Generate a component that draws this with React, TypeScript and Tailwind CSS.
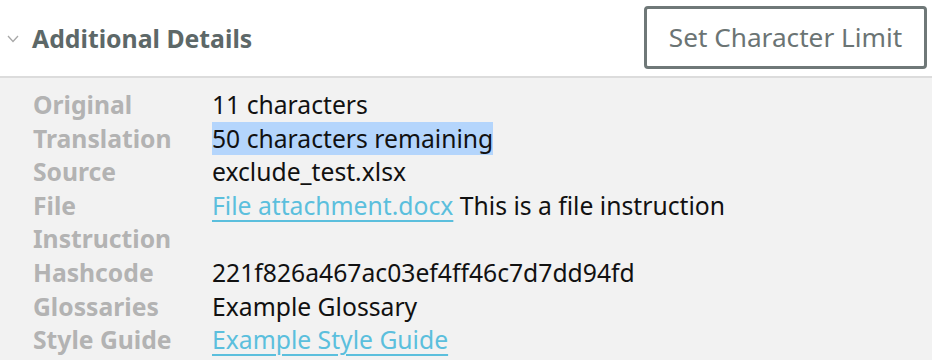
const ROWS: { label: string; value: React.ReactNode }[] = [
  { label: 'Original', value: '11 characters' },
  {
    label: 'Translation',
    value: <span className="inline-block bg-[#b4d5fc]">50 characters remaining</span>,
  },
  { label: 'Source', value: 'exclude_test.xlsx' },
  {
    label: 'File Instruction',
    value: (
      <>
        <a href="#" className="text-[#5bbfdd] underline decoration-2 underline-offset-[5px]">
          File attachment.docx
        </a>{' '}
        This is a file instruction
      </>
    ),
  },
  { label: 'Hashcode', value: '221f826a467ac03ef4ff46c7d7dd94fd' },
  { label: 'Glossaries', value: 'Example Glossary' },
  {
    label: 'Style Guide',
    value: (
      <a href="#" className="text-[#5bbfdd] underline decoration-2 underline-offset-[5px]">
        Example Style Guide
      </a>
    ),
  },
]

export default function App() {
  return (
    <div className="w-[932px] h-[360px] overflow-hidden bg-[#f2f2f2] font-['Noto_Sans',sans-serif]">
      <div className="flex items-center justify-between h-[78px] bg-white border-b-2 border-[#dcdcdc] pl-[7px] pr-[5px]">
        <div className="flex items-center gap-[13px]">
          <svg width="12" height="8" viewBox="0 0 12 8" className="mt-[2px]">
            <polyline points="1,1 6,6.5 11,1" fill="none" stroke="#a8a8a8" strokeWidth="1.3" />
          </svg>
          <h2 className="text-[24.8px] font-bold text-[#5d6868] leading-none">Additional Details</h2>
        </div>
        <button className="h-[63px] w-[283px] mb-[1px] border-[3px] border-[#6f7878] rounded-[4px] bg-white text-[26.2px] text-[#6b7474]">
          Set Character Limit
        </button>
      </div>

      <div className="pl-[33px] pt-[10px]">
        {ROWS.map((row) => (
          <div key={row.label} className="flex text-[24.7px] leading-[33.6px]">
            <div className="w-[179px] shrink-0 font-bold text-[#b3b3b3]">
              {row.label === 'File Instruction' ? (
                <>
                  File
                  <br />
                  Instruction
                </>
              ) : (
                row.label
              )}
            </div>
            <div className="text-[#111]">{row.value}</div>
          </div>
        ))}
      </div>
    </div>
  )
}
